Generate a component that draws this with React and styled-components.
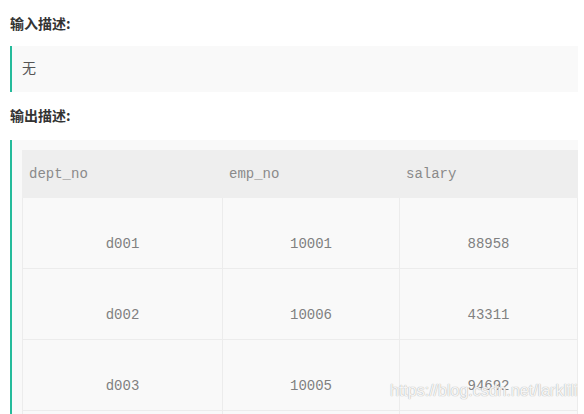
import React from 'react';
import styled, { createGlobalStyle } from 'styled-components';

const rows = [
  { dept: 'd001', emp: '10001', salary: '88958' },
  { dept: 'd002', emp: '10006', salary: '43311' },
  { dept: 'd003', emp: '10005', salary: '94692' }
];

const GlobalStyle = createGlobalStyle`
  html, body {
    margin: 0;
    padding: 0;
    background: #fff;
    overflow: hidden;
  }
`;

const Page = styled.div`
  position: relative;
  width: 584px;
  height: 414px;
  overflow: hidden;
  padding: 13px 6px 0 10px;
  box-sizing: border-box;
  font-family: "Noto Sans CJK SC", "Noto Sans", sans-serif;
`;

const Heading = styled.div`
  font-size: 14px;
  line-height: 20px;
  font-weight: bold;
  color: #333;
  margin-bottom: ${(p) => p.gap}px;
`;

const Quote = styled.div`
  border-left: 2px solid #25bb9b;
  background: #f9f9f9;
  padding: ${(p) => (p.table ? '10px 0 10px 10px' : '10px 10px 14px')};
  margin-bottom: 13px;
  font-size: 14px;
  line-height: 22px;
  color: #555;
`;

const Table = styled.table`
  width: 555px;
  border-collapse: collapse;
  table-layout: fixed;
  font-family: "Liberation Mono", "Courier New", monospace;
  font-size: 14px;
  color: #808080;
`;

const Th = styled.th`
  width: ${(p) => p.w}px;
  height: 47px;
  padding: 0 6px;
  box-sizing: border-box;
  background: #eee;
  border: 1px solid #eee;
  text-align: left;
  font-weight: normal;
  color: #8a8a8a;
`;

const Td = styled.td`
  height: 71px;
  padding: 36px 7px 14px;
  box-sizing: border-box;
  border: 1px solid #ececec;
  text-align: center;
  line-height: 20px;
`;

const Watermark = styled.div`
  position: absolute;
  left: 390px;
  top: 381px;
  font-family: "Liberation Sans", Arial, sans-serif;
  font-size: 16px;
  line-height: 20px;
  color: rgba(255, 255, 255, 0.9);
  text-shadow: 0 0 1px #b0b0b0, 0 0 1px #c0c0c0;
  pointer-events: none;
`;

export default function App() {
  return (
    <>
      <GlobalStyle />
      <Page>
        <Heading gap={13}>输入描述:</Heading>
        <Quote>无</Quote>
        <Heading gap={15}>输出描述:</Heading>
        <Quote table>
          <Table>
            <thead>
              <tr>
                <Th w={200}>dept_no</Th>
                <Th w={177}>emp_no</Th>
                <Th w={178}>salary</Th>
              </tr>
            </thead>
            <tbody>
              {rows.map((r) => (
                <tr key={r.dept}>
                  <Td>{r.dept}</Td>
                  <Td>{r.emp}</Td>
                  <Td>{r.salary}</Td>
                </tr>
              ))}
              <tr>
                <Td />
                <Td />
                <Td />
              </tr>
            </tbody>
          </Table>
        </Quote>
        <Watermark>https://blog.csdn.net/larklili</Watermark>
      </Page>
    </>
  );
}
